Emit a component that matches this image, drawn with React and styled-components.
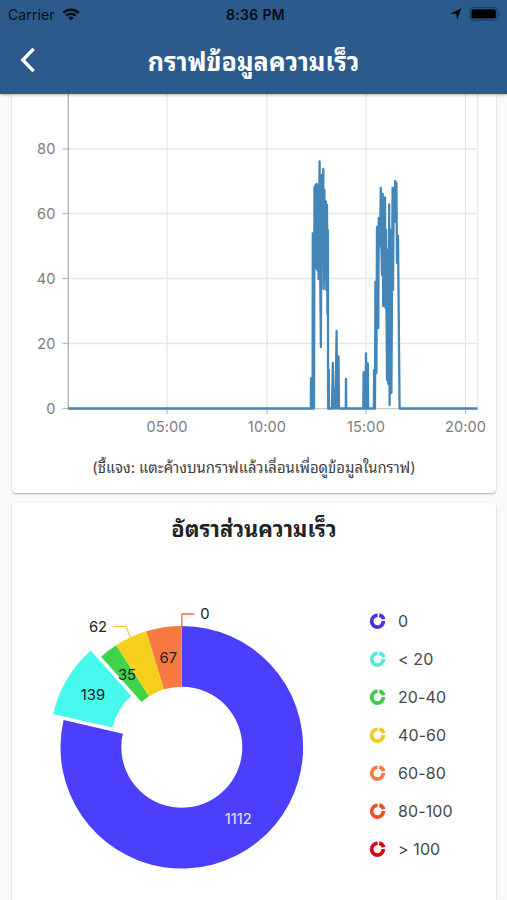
import React from 'react'
import styled, { createGlobalStyle } from 'styled-components'

const speedPoints = [
  [68, 408.5], [310.8, 408.5], [311, 378.5], [311.6, 408.5], [312.6, 408.5], [312.8, 233.5],
  [313.4, 408.5], [314, 408.5], [314.5, 187], [315.2, 265], [315.6, 185], [316.2, 268], [316.7, 184], [317.2, 270],
  [318, 186], [318.5, 279], [319.6, 161.5], [320.2, 277], [320.9, 347], [321.6, 175],
  [322.2, 262], [323.3, 169], [323.7, 289], [324.4, 190], [324.8, 280], [325.4, 201],
  [326, 202], [326.4, 290], [327, 205], [327.4, 314], [327.9, 230], [328.1, 408.5], [328.8, 370], [329, 408.5], [332, 408.5],
  [332.8, 363], [333.4, 408.5], [334.6, 390], [335.4, 408.5], [336.6, 331], [337.2, 408.5],
  [338.5, 356.5], [339, 408.5], [345.8, 408.5], [346, 379], [346.2, 408.5], [363.3, 408.5],
  [363.6, 372.5], [364.6, 408.5], [365, 372], [365.4, 408.5], [366, 353.5], [366.8, 408.5], [367.8, 363.5], [368.1, 408.5],
  [373.9, 408.5], [374.1, 370], [375, 408.5], [375.4, 282], [376.4, 373], [377, 227],
  [378.2, 328], [378.8, 218], [380, 246], [380.8, 188], [381.4, 245], [382, 275], [382.7, 194],
  [383.2, 306], [384, 198], [385, 197.5], [385.5, 308], [386, 230], [387, 380], [387.8, 250],
  [388.4, 384], [389.2, 204.5], [389.6, 405], [390.4, 230], [391.4, 393], [392.6, 188],
  [393, 290], [393.8, 188], [394.4, 222], [395.2, 181], [395.8, 220], [396.4, 183], [397, 263],
  [398, 236], [399.6, 408.5], [477.5, 408.5],
]

const yTicks = [[80, 149], [60, 213.5], [40, 278.5], [20, 343.5], [0, 408.5]]
const xTicks = [['05:00', 167], [ '10:00', 267], ['15:00', 366], ['20:00', 465.5]]

const slices = [
  { value: 1112, color: '#4b3ffb' },
  { value: 139, color: '#46f9ec', offset: 12 },
  { value: 35, color: '#3fd24b' },
  { value: 62, color: '#f6cf1d' },
  { value: 67, color: '#f7793f' },
]

const legend = [
  { label: '0', color: '#4733e0' },
  { label: '< 20', color: '#52e9df' },
  { label: '20-40', color: '#3cc945' },
  { label: '40-60', color: '#efc823' },
  { label: '60-80', color: '#f27c45' },
  { label: '80-100', color: '#ea5130' },
  { label: '> 100', color: '#d9060f' },
]

const polar = (cx, cy, r, a) => `${(cx + r * Math.sin(a)).toFixed(2)} ${(cy - r * Math.cos(a)).toFixed(2)}`

const ringPath = (cx, cy, outer, inner, from, to) => {
  const large = to - from > Math.PI ? 1 : 0
  return `M${polar(cx, cy, outer, from)} A${outer} ${outer} 0 ${large} 1 ${polar(cx, cy, outer, to)} L${polar(cx, cy, inner, to)} A${inner} ${inner} 0 ${large} 0 ${polar(cx, cy, inner, from)} Z`
}

const StatusBar = () => (
  <Status>
    <div className="carrier">
      Carrier
      <svg width="18" height="13" viewBox="0 0 18 13" fill="none" stroke="#080d14">
        <path d="M1.3 4.9 A11 11 0 0 1 16.7 4.9" strokeWidth="2.3" />
        <path d="M4.1 7.8 A7 7 0 0 1 13.9 7.8" strokeWidth="2.2" />
        <path d="M9 12.6 L6.2 9.8 A4 4 0 0 1 11.8 9.8 Z" fill="#080d14" stroke="none" />
      </svg>
    </div>
    <div className="clock">8:36 PM</div>
    <div className="battery">
      <svg width="12" height="12" viewBox="0 0 12 12">
        <path d="M11.6 .2 L7 11.8 L6.2 6.1 L.2 5.4 Z" fill="#080d14" />
      </svg>
      <svg width="32" height="14" viewBox="0 0 32 14">
        <rect x=".9" y=".6" width="27.4" height="12.6" rx="3" fill="none" stroke="#1b3a5e" strokeWidth="1" />
        <rect x="2.4" y="2.2" width="24.4" height="9.4" rx="1.6" fill="#000" />
        <path d="M29.6 4.8 Q31.6 7 29.6 9.2 Z" fill="#1b3a5e" />
      </svg>
    </div>
  </Status>
)

const SpeedChart = () => (
  <ChartSvg viewBox="12 94 484 350">
    {yTicks.map(([label, y]) => (
      <g key={label}>
        {label !== 0 && <line x1="68" x2="478" y1={y} y2={y} stroke="#e6e6e6" strokeWidth="1.3" />}
        <line x1="62.5" x2="68" y1={y} y2={y} stroke="#bdbdbd" strokeWidth="1.3" />
        <text x="55.5" y={y + 5} textAnchor="end">{label}</text>
      </g>
    ))}
    {xTicks.map(([label, x]) => (
      <g key={label}>
        <line x1={x} x2={x} y1="94" y2="408" stroke="#e6e6e6" strokeWidth="1.3" />
        <line x1={x} x2={x} y1="408" y2="414" stroke="#bdbdbd" strokeWidth="1.3" />
        <text x={x} y="432" textAnchor="middle">{label}</text>
      </g>
    ))}
    <line x1="477.5" x2="477.5" y1="94" y2="408" stroke="#e9e9e9" strokeWidth="1.3" />
    <line x1="68.3" x2="68.3" y1="94" y2="409" stroke="#b0b0b0" strokeWidth="1.3" />
    <line x1="68" x2="478" y1="408.7" y2="408.7" stroke="#cccccc" strokeWidth="1.3" />
    <polyline
      points={speedPoints.map((p) => p.join(',')).join(' ')}
      fill="none"
      stroke="#4586b9"
      strokeWidth="2.3"
      strokeLinejoin="round"
    />
  </ChartSvg>
)

const RatioPie = () => {
  const total = slices.reduce((sum, s) => sum + s.value, 0)
  let angle = 0

  return (
    <PieSvg viewBox="12 546 340 354">
      {slices.map((s) => {
        const from = angle
        const to = angle + (s.value / total) * Math.PI * 2
        const mid = (from + to) / 2
        const off = s.offset || 0
        angle = to
        return (
          <path
            key={s.value}
            d={ringPath(181.8 + off * Math.sin(mid), 747.2 - off * Math.cos(mid), 121.3, 60.5, from, to)}
            fill={s.color}
          />
        )
      })}
      <path d="M130.3 637 L126 626.3 H113.3" fill="none" stroke="#f0c93c" strokeWidth="1.3" />
      <path d="M181.9 627 V614 H194.3" fill="none" stroke="#ee6a4c" strokeWidth="1.3" />
      <text x="98" y="631.5">62</text>
      <text x="205" y="619.3">0</text>
      <text x="168.3" y="662.5">67</text>
      <text x="127" y="680">35</text>
      <text x="93" y="700">139</text>
      <text x="238.3" y="823.5" className="light">1112</text>
    </PieSvg>
  )
}

const App = () => {
  return (
    <Screen>
      <GlobalStyle />
      <Header>
        <StatusBar />
        <NavBar>
          <svg width="16" height="26" viewBox="0 0 16 26">
            <path d="M13.6 .9 L2.8 12 L13.6 23.1" fill="none" stroke="#fff" strokeWidth="3.4" />
          </svg>
          <h1>กราฟข้อมูลความเร็ว</h1>
        </NavBar>
      </Header>

      <Content>
        <Card $scrolled>
          <SpeedChart />
          <Note>(ชี้แจง: แตะค้างบนกราฟแล้วเลื่อนเพื่อดูข้อมูลในกราฟ)</Note>
        </Card>

        <Card $grow>
          <CardTitle>อัตราส่วนความเร็ว</CardTitle>
          <PieRow>
            <RatioPie />
            <Legend>
              {legend.map((item) => (
                <LegendItem key={item.label}>
                  <svg width="18" height="18" viewBox="0 0 18 18" fill={item.color}>
                    <path d={ringPath(8.5, 9.2, 7.7, 4, 1.55, 6.3)} />
                    <path d={ringPath(9.1, 8.8, 7.6, 4, 0.2, 1.3)} />
                  </svg>
                  <span>{item.label}</span>
                </LegendItem>
              ))}
            </Legend>
          </PieRow>
        </Card>
      </Content>
    </Screen>
  )
}

export default App

const GlobalStyle = createGlobalStyle`
  * {
    box-sizing: border-box;
  }
  body {
    margin: 0;
    font-family: Inter, Thonburi, "Noto Sans Thai Looped", Loma, Garuda, Waree, Sarabun, "Noto Sans Thai", "Noto Sans", sans-serif;
  }
`;

const Screen = styled.div`
  width: 507px;
  height: 900px;
  display: flex;
  flex-direction: column;
  overflow: hidden;
  background: #fafafa;
`;

const Header = styled.header`
  height: 94px;
  flex: none;
  background: #2d5a8c;
  box-shadow: 0 1px 3px rgba(0, 0, 0, 0.3);
  z-index: 1;
`;

const Status = styled.div`
  height: 28px;
  padding: 0 6px 0 8px;
  display: grid;
  grid-template-columns: 1fr auto 1fr;
  align-items: center;
  font-size: 14px;
  color: #080d14;

  .carrier {
    display: flex;
    align-items: center;
    gap: 7px;
    letter-spacing: 0.1px;
  }
  .clock {
    padding-left: 2px;
    font-weight: 600;
    font-size: 14px;
    letter-spacing: 0.3px;
  }
  .battery {
    display: flex;
    justify-content: flex-end;
    align-items: center;
    gap: 7px;
  }
`;

const NavBar = styled.div`
  height: 66px;
  padding: 0 20px;
  display: grid;
  grid-template-columns: 16px 1fr 16px;
  align-items: center;

  h1 {
    margin: -4px 0 0;
    text-align: center;
    color: #fff;
    font-size: 25.2px;
    font-weight: 700;
    white-space: nowrap;
  }
`;

const Content = styled.main`
  flex: 1;
  min-height: 0;
  padding: 0 11px 0 12px;
  display: flex;
  flex-direction: column;
  gap: 10px;
`;

const Card = styled.section`
  height: ${(p) => (p.$scrolled ? '399px' : 'auto')};
  flex: ${(p) => (p.$grow ? '1' : 'none')};
  background: #fff;
  border-radius: ${(p) => (p.$scrolled ? '0 0 4px 4px' : '4px 4px 0 0')};
  box-shadow: 0 1px 2px rgba(0, 0, 0, 0.3);
`;

const ChartSvg = styled.svg`
  display: block;
  width: 484px;
  height: 350px;

  text {
    font-size: 14.6px;
    letter-spacing: 0.1px;
    fill: #7d7d7d;
  }
`;

const Note = styled.p`
  margin: 12px 0 0;
  line-height: 24px;
  text-align: center;
  font-size: 14.85px;
  color: #3c3c3c;
  white-space: nowrap;
`;

const CardTitle = styled.h2`
  margin: 0;
  height: 43px;
  padding-top: 8px;
  line-height: 36px;
  text-align: center;
  font-size: 21.8px;
  font-weight: 700;
  color: #222;
`;

const PieRow = styled.div`
  display: flex;
`;

const PieSvg = styled.svg`
  display: block;
  width: 340px;
  height: 354px;
  flex: none;

  text {
    font-size: 14.8px;
    fill: #222;
    text-anchor: middle;
  }
  .light {
    fill: #e8e6ff;
  }
`;

const Legend = styled.div`
  padding: 56px 0 0 17px;
`;

const LegendItem = styled.div`
  height: 38px;
  display: flex;
  align-items: center;
  gap: 11px;
  font-size: 16px;
  letter-spacing: 0.1px;
  color: #484848;
  white-space: nowrap;
`;
